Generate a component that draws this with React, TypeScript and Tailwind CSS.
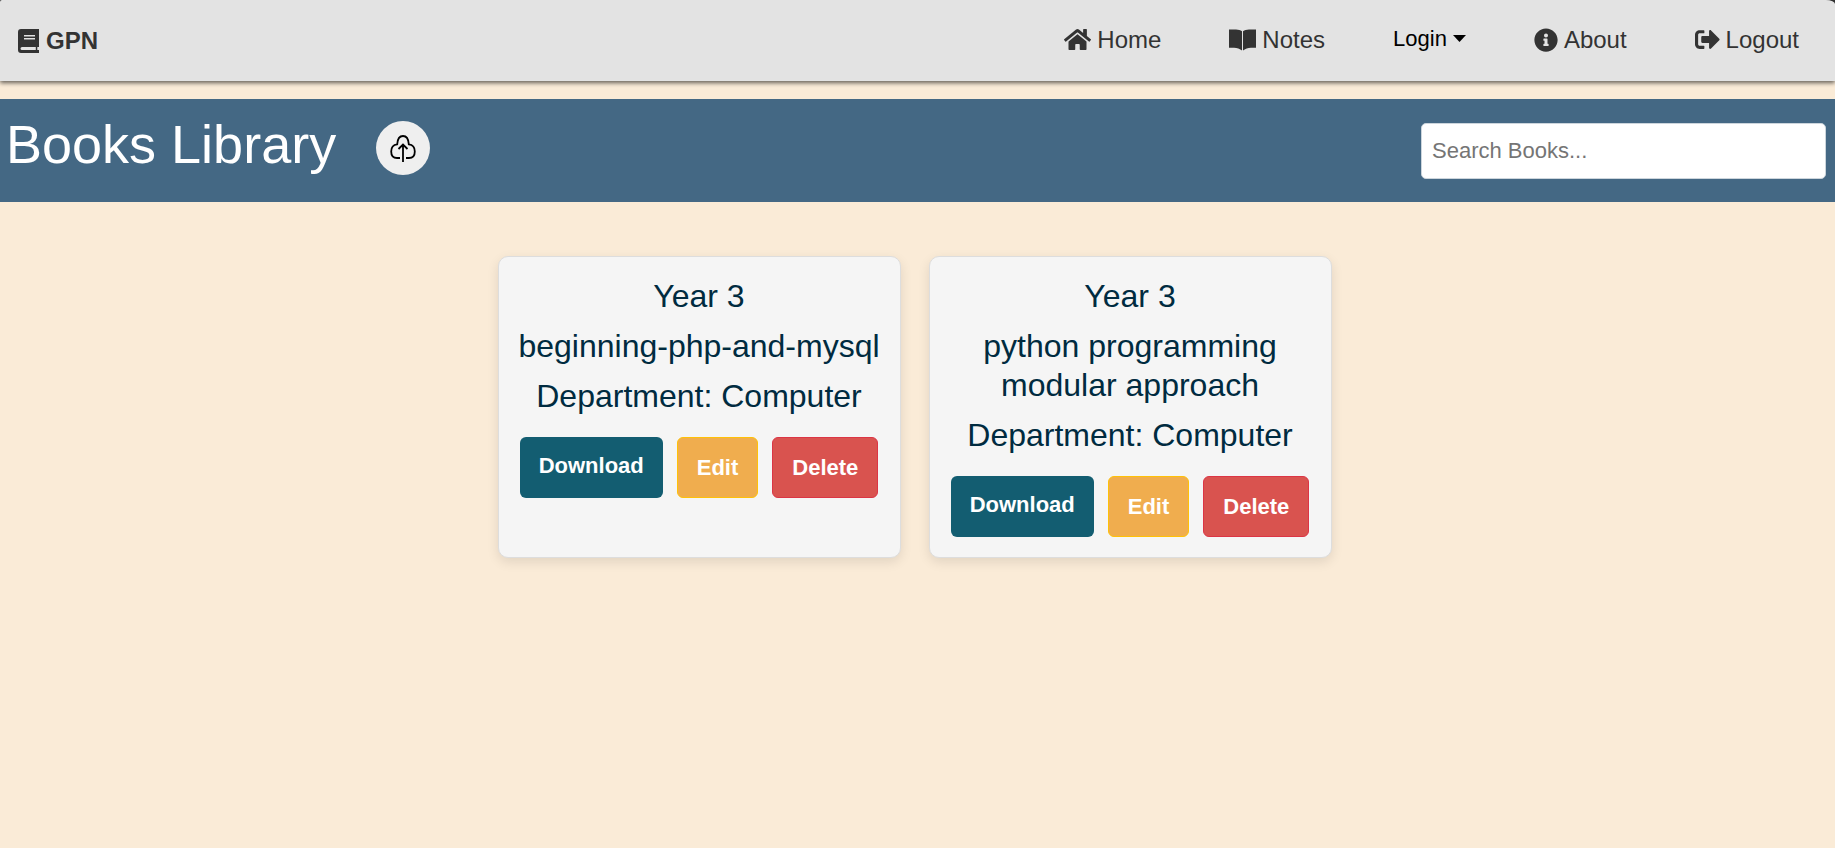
import type { ReactNode } from "react";
import { FaHome, FaInfoCircle, FaSignOutAlt } from "react-icons/fa";

const books = [
  { year: 3, title: "beginning-php-and-mysql", department: "Computer" },
  { year: 3, title: "python programming modular approach", department: "Computer" },
];

function BookIcon() {
  return (
    <svg width="24" height="24" viewBox="0 0 24 24" fill="currentColor" fillRule="evenodd" aria-hidden="true">
      <path d="M5 0H23V18H21.3V21H23V24H5A3 3 0 0 1 2 21V3A3 3 0 0 1 5 0ZM8 6V7.4H19V6ZM8 9V10.4H19V9ZM6 18A1.5 1.5 0 0 0 6 21H19.8V18Z" />
    </svg>
  );
}

function OpenBookIcon() {
  return (
    <svg width="27" height="22" viewBox="0 0 27 22" fill="currentColor" aria-hidden="true">
      <path d="M0 .5H7C9.5.5 11.5 1.2 13 2.3V21.5C11 20 8 19 5 18.8H0ZM27 .5H20C17.5.5 15.5 1.2 14 2.3V21.5C16 20 19 19 22 18.8H27Z" />
    </svg>
  );
}

function CloudUploadIcon() {
  return (
    <svg width="26" height="28" viewBox="0 0 26 28" fill="none" stroke="currentColor" strokeWidth="1.8" aria-hidden="true">
      <path d="M10 24H7C3.5 24 1.2 21.5 1.2 17.5C1.2 13.5 3.5 10.7 7.2 10.3C7.5 5.5 9.5 2 13 2S18.5 5.5 18.8 10.3C22.5 10.7 24.8 13.5 24.8 17.5C24.8 21.5 22.5 24 19 24H16M13 28V10.5M8.5 15L13 10.5L17.5 15" />
    </svg>
  );
}

function NavLink({ icon, children }: { icon: ReactNode; children: ReactNode }) {
  return (
    <a href="#" className="flex items-center gap-1.5 text-2xl text-[#333]">
      {icon}
      {children}
    </a>
  );
}

function BookCard({ year, title, department }: (typeof books)[number]) {
  return (
    <article className="flex w-[403px] flex-col items-center rounded-[10px] border border-[#ddd] bg-[#f5f5f5] px-4 py-5 text-center shadow-[0_4px_12px_rgba(0,0,0,0.1)]">
      <div className="flex flex-col gap-[11px] text-[32px] leading-[39px] text-[#002b40]">
        <h2>Year {year}</h2>
        <h3>{title}</h3>
        <p>Department: {department}</p>
      </div>
      <div className="mt-[21px] flex gap-3.5 text-[22px] leading-[33px] font-bold text-white">
        <a href="#" className="h-[61px] rounded-md bg-[#135d71] px-[19px] py-3">Download</a>
        <button type="button" className="h-[61px] rounded-md border border-[#ffc107] bg-[#f0ad4e] px-[19px]">Edit</button>
        <button type="button" className="h-[61px] rounded-md border border-[#dc3545] bg-[#d9534f] px-[19px]">Delete</button>
      </div>
    </article>
  );
}

export default function App() {
  return (
    <div className="min-h-screen bg-[#faebd7] font-['Liberation_Sans',Arial,sans-serif]">
      <div className="bg-[#333]">
        <header className="flex h-[81px] items-center justify-between rounded-tl-[2px] rounded-tr-[9px_4px] bg-[#e3e3e3] pr-9 pl-4 shadow-[0_2px_4px_rgba(0,0,0,0.6)]">
          <a href="#" className="flex items-center gap-1.5 text-2xl font-bold text-[#333]">
            <BookIcon />
            GPN
          </a>
          <nav className="flex items-center gap-[68px] pb-0.5">
            <NavLink icon={<FaHome size={27} />}>Home</NavLink>
            <NavLink icon={<OpenBookIcon />}>Notes</NavLink>
            <button type="button" className="flex items-center gap-1.5 pb-0.5 text-[22px] text-black">
              Login
              <svg width="13" height="7" viewBox="0 0 13 7" fill="currentColor" aria-hidden="true">
                <path d="M0 0H13L6.5 7Z" />
              </svg>
            </button>
            <NavLink icon={<FaInfoCircle />}>About</NavLink>
            <NavLink icon={<FaSignOutAlt size={25} />}>Logout</NavLink>
          </nav>
        </header>
      </div>

      <section className="mt-[18px] flex h-[103px] items-center justify-between bg-[#446884] pr-[9px] pl-1.5">
        <div className="flex items-center gap-10 pb-1.5">
          <h1 className="pb-2 text-[54px] leading-[64px] text-white">Books Library</h1>
          <button type="button" aria-label="Upload book" className="flex size-[54px] items-center justify-center rounded-full bg-[#efefef] text-black">
            <CloudUploadIcon />
          </button>
        </div>
        <input
          type="search"
          aria-label="Search books"
          placeholder="Search Books..."
          className="h-14 w-[405px] rounded-[5px] border border-[#ccd5dc] bg-white px-2.5 text-[22px] text-black placeholder:text-[#757575]"
        />
      </section>

      <main className="flex justify-center gap-7 pt-[54px] pr-1.5">
        {books.map((book) => (
          <BookCard key={book.title} {...book} />
        ))}
      </main>
    </div>
  );
}
